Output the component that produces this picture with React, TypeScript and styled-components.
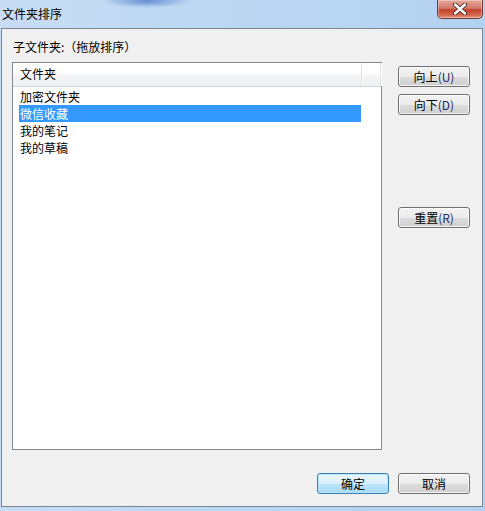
import React from "react";
import styled, { createGlobalStyle } from "styled-components";

const Global = createGlobalStyle`
  html, body { margin: 0; padding: 0; }
  body {
    width: 485px; height: 511px; overflow: hidden;
    font-family: "Noto Sans CJK SC", "Liberation Sans", sans-serif;
    font-size: 12px; color: #000;
    background: #b9d4f0;
  }
`;

const Window = styled.div`
  width: 485px; height: 511px;
  display: flex; flex-direction: column;
  background: linear-gradient(90deg, #c8ddf4 0%, #bcd7f2 45%, #b3d2f1 100%);
  padding: 0 2px 4px 1px;
  box-sizing: border-box;
`;

const TitleBar = styled.div`
  height: 28px; flex: none;
  display: flex; align-items: flex-start; justify-content: space-between;
  background:
    radial-gradient(ellipse 44px 7px at 146px 1px, rgba(60,110,200,0.7), rgba(60,110,200,0) 100%),
    transparent;
`;

const Title = styled.div`
  padding: 6px 0 0 1px;
  font-size: 12px; line-height: 16px; color: #000;
`;

const CloseButton = styled.div`
  width: 46px; height: 19px;
  box-sizing: border-box;
  border: 1px solid #6d3b35; border-top: none;
  border-radius: 0 0 5px 5px;
  background: linear-gradient(180deg, #e4a79c 0%, #d37868 45%, #c2412d 55%, #d56b4f 85%, #e79a80 100%);
  box-shadow: inset 0 0 0 1px rgba(255,255,255,0.35);
  display: flex; align-items: center; justify-content: center;
`;

const Client = styled.div`
  flex: 1;
  border: 1px solid #7a8794;
  background: #f0f0f0;
  display: flex; flex-direction: column;
  padding: 10px 12px 12px 10px;
`;

const Label = styled.div`
  line-height: 16px; padding-left: 1px;
`;

const Body = styled.div`
  display: flex; gap: 16px; margin-top: 7px;
`;

const ListBox = styled.div`
  width: 370px; height: 388px; box-sizing: border-box;
  border: 1px solid #828790;
  background: #fff;
  display: flex; flex-direction: column;
`;

const Header = styled.div`
  display: flex; height: 23px; flex: none;
  background: linear-gradient(180deg, #ffffff 0%, #ffffff 40%, #f3f4f6 60%, #eff0f2 100%);
  border-bottom: 1px solid #d5d5d5;
`;

const HeaderCell = styled.div<{ $w?: number }>`
  ${(p) => (p.$w ? `width: ${p.$w}px;` : "flex: 1;")}
  box-sizing: border-box;
  padding-left: 7px;
  line-height: 22px;
  border-right: 1px solid #e3e3e3;
  box-shadow: 1px 0 0 #fff;
`;

const Rows = styled.div`
  padding: 1px 0 0 6px;
`;

const Row = styled.div<{ $sel?: boolean }>`
  width: 342px; height: 17px; line-height: 17px;
  padding-left: 1px; box-sizing: border-box;
  background: ${(p) => (p.$sel ? "#3399ff" : "transparent")};
  color: ${(p) => (p.$sel ? "#fff" : "#000")};
`;

const Side = styled.div`
  width: 72px; display: flex; flex-direction: column;
  padding-top: 4px;
`;

const Btn = styled.div<{ $default?: boolean; $mt?: number }>`
  width: 72px; height: 21px; box-sizing: border-box;
  margin-top: ${(p) => p.$mt ?? 0}px;
  border: 1px solid ${(p) => (p.$default ? "#3c7fb1" : "#707070")};
  border-radius: 3px;
  background: ${(p) =>
    p.$default
      ? "linear-gradient(180deg, #eaf6fd 0%, #d9f0fc 50%, #bee6fd 51%, #a7d9f5 100%)"
      : "linear-gradient(180deg, #f2f2f2 0%, #ebebeb 50%, #dddddd 51%, #cfcfcf 100%)"};
  box-shadow: inset 0 0 0 1px ${(p) => (p.$default ? "rgba(180,230,255,0.9)" : "rgba(255,255,255,0.75)")};
  display: flex; align-items: center; justify-content: center;
  line-height: 16px; font-size: 12px;
`;

const Accel = styled.span`
  color: #1c2a6a;
`;

const Footer = styled.div`
  display: flex; justify-content: flex-end; gap: 9px;
  margin-top: auto;
`;

export default function App() {
  return (
    <>
      <Global />
      <Window>
        <TitleBar>
          <Title>文件夹排序</Title>
          <CloseButton>
            <svg width="16" height="12" viewBox="0 0 16 12">
              <path d="M3 1.5 L13 10.5 M13 1.5 L3 10.5" stroke="#4a2a26" strokeWidth="4.2" strokeLinecap="round" />
              <path d="M3 1.5 L13 10.5 M13 1.5 L3 10.5" stroke="#ffffff" strokeWidth="2.4" strokeLinecap="round" />
            </svg>
          </CloseButton>
        </TitleBar>
        <Client>
          <Label>子文件夹:（拖放排序）</Label>
          <Body>
            <ListBox>
              <Header>
                <HeaderCell $w={349}>文件夹</HeaderCell>
                <HeaderCell />
              </Header>
              <Rows>
                <Row>加密文件夹</Row>
                <Row $sel>微信收藏</Row>
                <Row>我的笔记</Row>
                <Row>我的草稿</Row>
              </Rows>
            </ListBox>
            <Side>
              <Btn>向上<Accel>(U)</Accel></Btn>
              <Btn $mt={7}>向下<Accel>(D)</Accel></Btn>
              <Btn $mt={92}>重置<Accel>(R)</Accel></Btn>
            </Side>
          </Body>
          <Footer>
            <Btn $default>确定</Btn>
            <Btn>取消</Btn>
          </Footer>
        </Client>
      </Window>
    </>
  );
}
